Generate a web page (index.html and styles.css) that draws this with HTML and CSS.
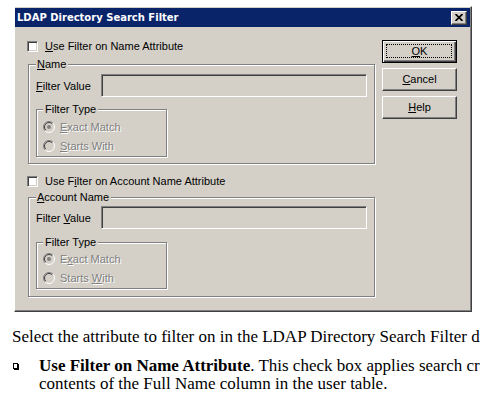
FILE: index.html
```html
<!DOCTYPE html>
<html>
<head>
<meta charset="utf-8">
<link rel="stylesheet" href="styles.css">
</head>
<body>
<div class="page">
  <div class="dialog">
    <div class="titlebar">
      <span class="title">LDAP Directory Search Filter</span>
      <span class="close"><svg width="8" height="7" viewBox="0 0 8 7"><path d="M0.5 0 L7.5 7 M7.5 0 L0.5 7" stroke="#000" stroke-width="1.7"/></svg></span>
    </div>
    <div class="dbody">
      <div class="left">
        <div class="check"><span class="box"></span><span><u>U</u>se Filter on Name Attribute</span></div>
        <fieldset class="group group-name">
          <legend><u>N</u>ame</legend>
          <div class="field-row"><span class="lbl"><u>F</u>ilter Value</span><span class="edit"></span></div>
          <fieldset class="sub">
            <legend>Filter Type</legend>
            <div class="radio"><svg class="rb" width="12" height="12" viewBox="0 0 12 12"><circle cx="6" cy="6" r="5" fill="#d4d0c8"/><path d="M2.1 9.9 A5.5 5.5 0 0 1 9.9 2.1" fill="none" stroke="#808080"/><path d="M9.9 2.1 A5.5 5.5 0 0 1 2.1 9.9" fill="none" stroke="#fff"/><path d="M2.8 9.2 A4.5 4.5 0 0 1 9.2 2.8" fill="none" stroke="#404040"/><circle cx="6" cy="6" r="2" fill="#808080"/></svg><span class="dis"><u>E</u>xact Match</span></div>
            <div class="radio"><svg class="rb" width="12" height="12" viewBox="0 0 12 12"><circle cx="6" cy="6" r="5" fill="#d4d0c8"/><path d="M2.1 9.9 A5.5 5.5 0 0 1 9.9 2.1" fill="none" stroke="#808080"/><path d="M9.9 2.1 A5.5 5.5 0 0 1 2.1 9.9" fill="none" stroke="#fff"/><path d="M2.8 9.2 A4.5 4.5 0 0 1 9.2 2.8" fill="none" stroke="#404040"/></svg><span class="dis"><u>S</u>tarts With</span></div>
          </fieldset>
        </fieldset>
        <div class="check check-2"><span class="box"></span><span>Use F<u>i</u>lter on Account Name Attribute</span></div>
        <fieldset class="group group-account">
          <legend><u>A</u>ccount Name</legend>
          <div class="field-row"><span class="lbl">Filter <u>V</u>alue</span><span class="edit"></span></div>
          <fieldset class="sub">
            <legend>Filter Type</legend>
            <div class="radio"><svg class="rb" width="12" height="12" viewBox="0 0 12 12"><circle cx="6" cy="6" r="5" fill="#d4d0c8"/><path d="M2.1 9.9 A5.5 5.5 0 0 1 9.9 2.1" fill="none" stroke="#808080"/><path d="M9.9 2.1 A5.5 5.5 0 0 1 2.1 9.9" fill="none" stroke="#fff"/><path d="M2.8 9.2 A4.5 4.5 0 0 1 9.2 2.8" fill="none" stroke="#404040"/><circle cx="6" cy="6" r="2" fill="#808080"/></svg><span class="dis">E<u>x</u>act Match</span></div>
            <div class="radio"><svg class="rb" width="12" height="12" viewBox="0 0 12 12"><circle cx="6" cy="6" r="5" fill="#d4d0c8"/><path d="M2.1 9.9 A5.5 5.5 0 0 1 9.9 2.1" fill="none" stroke="#808080"/><path d="M9.9 2.1 A5.5 5.5 0 0 1 2.1 9.9" fill="none" stroke="#fff"/><path d="M2.8 9.2 A4.5 4.5 0 0 1 9.2 2.8" fill="none" stroke="#404040"/></svg><span class="dis">Starts <u>W</u>ith</span></div>
          </fieldset>
        </fieldset>
      </div>
      <div class="buttons">
        <div class="btn btn-default"><span><u>O</u>K</span></div>
        <div class="btn"><span><u>C</u>ancel</span></div>
        <div class="btn"><span><u>H</u>elp</span></div>
      </div>
    </div>
  </div>
  <div class="doc">
    <p class="lead">Select the attribute to filter on in the LDAP Directory Search Filter dialog box:</p>
    <ul class="bullets">
      <li><span class="mark"><span class="sq"></span></span><span class="ltext"><b>Use Filter on Name Attribute</b>. This check box applies search criteria to the<br>contents of the Full Name column in the user table.</span></li>
    </ul>
  </div>
</div>
</body>
</html>
```

FILE: styles.css
```css
* { box-sizing: border-box; }
html, body { margin: 0; padding: 0; background: #fff; }
body { width: 480px; height: 406px; overflow: hidden; }

.page { padding-top: 6px; }

.dialog {
  margin-left: 14px;
  width: 458px;
  height: 306px;
  background: #d4d0c8;
  border: 1px solid;
  border-color: #fff #404040 #404040 #fff;
  box-shadow: inset -1px -1px 0 #808080;
  padding: 1px 1px 0 0;
  font-family: "Liberation Sans", Arial, sans-serif;
  font-size: 11px;
  color: #000;
}

.titlebar {
  height: 19px;
  background: #0a246a;
  display: flex;
  align-items: center;
  justify-content: space-between;
  padding: 0 3px 0 2px;
}
.title {
  font-family: "DejaVu Sans", sans-serif;
  font-weight: bold;
  font-size: 10px;
  color: #fff;
  line-height: 12px;
}
.close {
  width: 16px;
  height: 14px;
  background: #d4d0c8;
  border: 1px solid;
  border-color: #fff #404040 #404040 #fff;
  box-shadow: inset -1px -1px 0 #808080;
  display: flex;
  align-items: center;
  justify-content: center;
}
.close svg { display: block; }

.dbody {
  display: flex;
  gap: 7px;
  padding: 13px 13px 0 12px;
}
.left { width: 348px; }

.check {
  display: flex;
  align-items: center;
  gap: 7px;
  height: 13px;
  line-height: 13px;
}
.check-2 { margin-top: 11px; }
.box {
  width: 11px;
  height: 11px;
  background: #fff;
  border: 1px solid;
  border-color: #808080 #fff #fff #808080;
  box-shadow: inset 1px 1px 0 #404040, inset -1px -1px 0 #d4d0c8;
}

u { text-decoration: underline; text-underline-offset: 1px; }

fieldset {
  margin: 0;
  min-width: 0;
  border: 1px solid #808080;
  box-shadow: 1px 1px 0 #fff, inset 1px 1px 0 #fff;
}
legend {
  padding: 0 2px 0 1px;
  line-height: 13px;
  height: 13px;
  background: #d4d0c8;
}

.group {
  width: 347px;
  margin-left: 1px;
  padding: 0 7px 6px 7px;
}
.group-name { margin-top: 5px; }
.group-account { margin-top: 3px; padding-bottom: 7px; }

.field-row {
  display: flex;
  align-items: center;
  height: 23px;
  margin-top: 3px;
}
.group-account .field-row { margin-top: 2px; }
.lbl { width: 65px; }
.edit {
  width: 267px;
  height: 23px;
  background: #d4d0c8;
  border: 1px solid;
  border-color: #808080 #fff #fff #808080;
  box-shadow: inset 1px 1px 0 #404040, inset -1px -1px 0 #d4d0c8;
}

.sub {
  width: 131px;
  margin-top: 6px;
  padding: 1px 4px 1px 6px;
}
.sub legend { padding: 0 2px 0 2px; }
.group-account .sub { margin-top: 7px; padding-top: 0; }

.radio {
  display: flex;
  align-items: center;
  gap: 5px;
  height: 19px;
}
.rb { display: block; flex: none; }
.dis { color: #808080; text-shadow: 1px 1px 0 #fff; }

.buttons {
  width: 75px;
  display: flex;
  flex-direction: column;
  gap: 5px;
}
.btn {
  position: relative;
  height: 23px;
  background: #d4d0c8;
  border: 1px solid;
  border-color: #fff #404040 #404040 #fff;
  box-shadow: inset -1px -1px 0 #808080;
  display: flex;
  align-items: center;
  justify-content: center;
  line-height: 13px;
}
.btn-default {
  border: 1px solid #000;
  box-shadow: inset 1px 1px 0 #fff, inset -1px -1px 0 #404040, inset -2px -2px 0 #808080;
}
.btn-default::after {
  content: "";
  position: absolute;
  left: 3px; right: 4px; top: 3px; bottom: 4px;
  border: 1px dotted #000;
}

.doc {
  width: 480px;
  overflow: hidden;
  padding-left: 12px;
  font-family: "Liberation Serif", "Times New Roman", serif;
  font-size: 17px;
  color: #000;
}
.lead {
  margin: 15px 0 0 0;
  line-height: 20px;
  white-space: nowrap;
}
.bullets {
  list-style: none;
  margin: 10px 0 0 0;
  padding: 0;
}
.bullets li {
  display: flex;
  line-height: 18px;
  white-space: nowrap;
}
.mark {
  width: 27px;
  flex: none;
  display: flex;
  align-items: center;
  height: 18px;
  padding-left: 1px;
}
.sq {
  width: 5px;
  height: 6px;
  border: 1px solid #000;
  box-shadow: 1px 1px 0 #000;
}
```
